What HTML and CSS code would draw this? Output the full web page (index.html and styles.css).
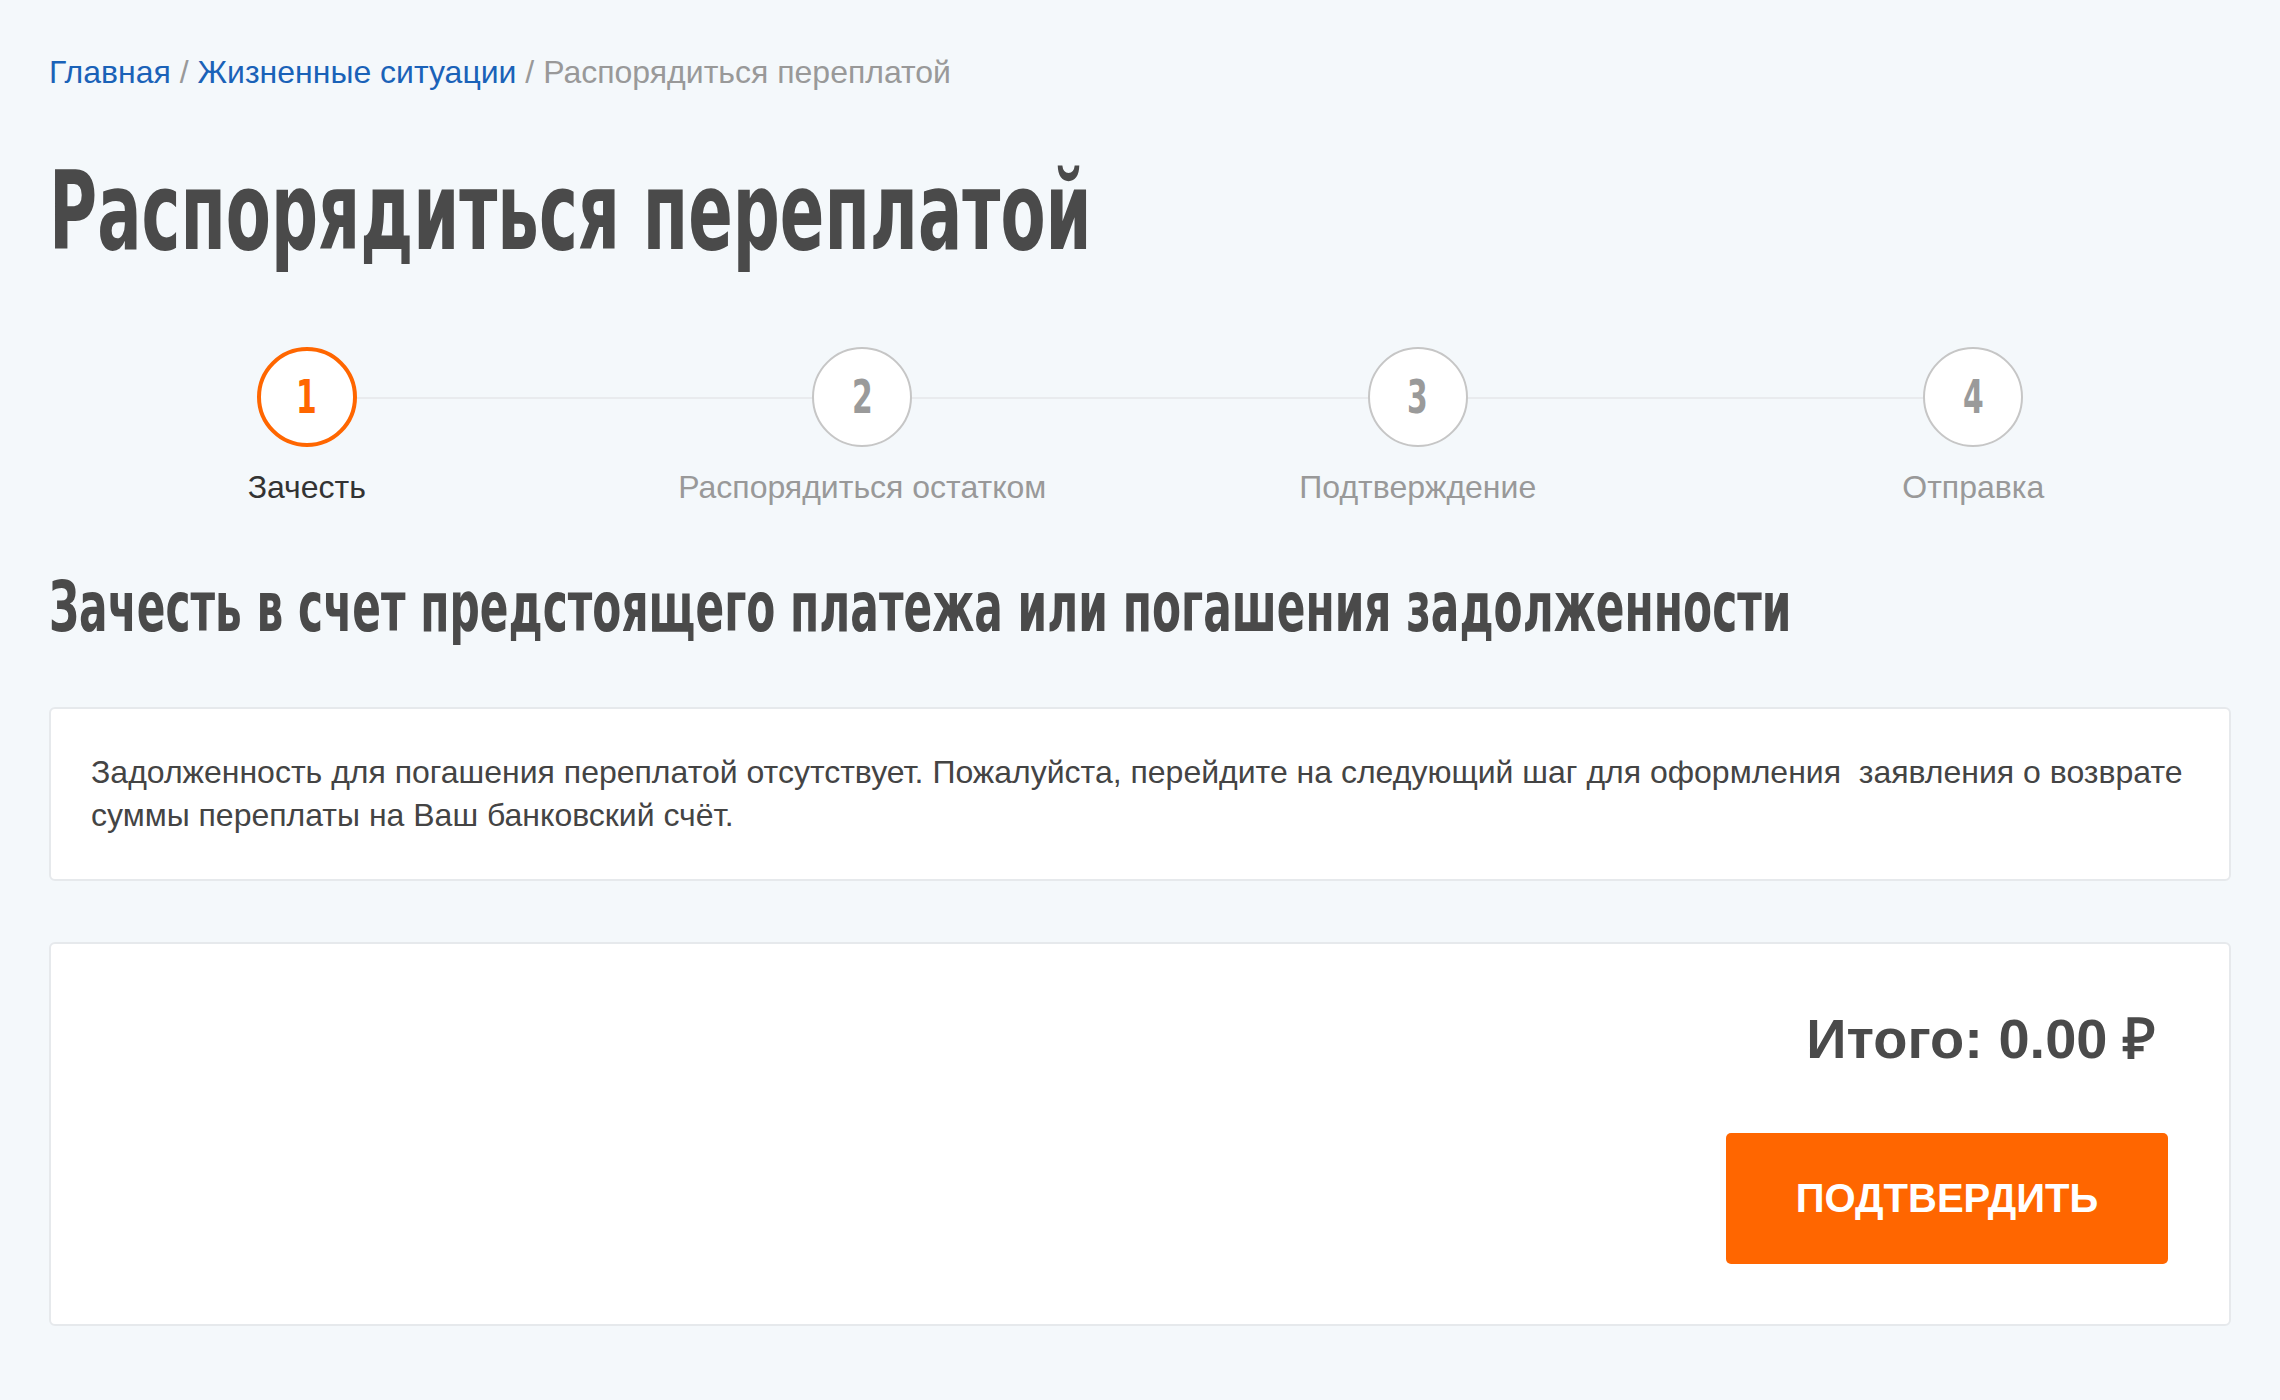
FILE: index.html
```html
<!DOCTYPE html>
<html lang="ru">
<head>
<meta charset="utf-8">
<title>Распорядиться переплатой</title>
<link rel="stylesheet" href="styles.css">
</head>
<body>
<div class="page">
  <nav class="crumbs">
    <a href="#">Главная</a> <span class="sep">/</span> <a href="#">Жизненные ситуации</a> <span class="sep">/</span> <span class="current">Распорядиться переплатой</span>
  </nav>
  <h1 class="title">Распорядиться переплатой</h1>
  <ol class="steps">
    <li class="step is-active"><span class="step-num"><span class="step-digit">1</span></span><span class="step-label">Зачесть</span></li>
    <li class="step"><span class="step-num"><span class="step-digit">2</span></span><span class="step-label">Распорядиться остатком</span></li>
    <li class="step"><span class="step-num"><span class="step-digit">3</span></span><span class="step-label">Подтверждение</span></li>
    <li class="step"><span class="step-num"><span class="step-digit">4</span></span><span class="step-label">Отправка</span></li>
  </ol>
  <h2 class="section-title">Зачесть в счет предстоящего платежа или погашения задолженности</h2>
  <div class="card info">
    Задолженность для погашения переплатой отсутствует. Пожалуйста, перейдите на следующий шаг для оформления&nbsp; заявления о возврате<br>суммы переплаты на Ваш банковский счёт.
  </div>
  <div class="card total">
    <div class="total-sum">Итого: 0.00 ₽</div>
    <button class="btn" type="button">ПОДТВЕРДИТЬ</button>
  </div>
</div>
</body>
</html>
```
FILE: styles.css
```css
body {
  margin: 0;
  background: #f4f8fb;
  font-family: "Liberation Sans", Arial, sans-serif;
  color: #444;
}

.page {
  padding: 50px 49px 75px;
}

.crumbs {
  font-size: 32px;
  line-height: 45px;
  color: #999;
}

.crumbs a {
  color: #1a62b8;
  text-decoration: none;
}

.title,
.section-title,
.step-num {
  font-family: "DejaVu Sans Condensed", "Liberation Sans Narrow", "Roboto Condensed", sans-serif;
  font-weight: 700;
}

.title {
  margin: 57px 0 0;
  font-size: 109px;
  line-height: 120px;
  color: #4a4a4a;
  white-space: nowrap;
  transform: scaleX(0.67);
  transform-origin: 0 0;
}

.steps {
  list-style: none;
  margin: 75px -20px 0;
  padding: 0;
  display: grid;
  grid-template-columns: repeat(4, 1fr);
  position: relative;
}

.steps::before {
  content: "";
  position: absolute;
  left: 12.5%;
  right: 12.5%;
  top: 50px;
  height: 2px;
  background: #e9ebee;
}

.step {
  display: flex;
  flex-direction: column;
  align-items: center;
  position: relative;
}

.step-num {
  width: 100px;
  height: 100px;
  box-sizing: border-box;
  border: 2px solid #c6c6c6;
  border-radius: 50%;
  background: #fff;
  display: flex;
  align-items: center;
  justify-content: center;
  font-size: 46px;
  color: #9a9a9a;
}

.step-digit {
  display: inline-block;
  transform: scaleX(0.72);
}

.is-active .step-num {
  border: 4px solid #ff6600;
  color: #ff6600;
}

.step-label {
  margin-top: 18px;
  font-size: 32px;
  line-height: 45px;
  color: #999;
}

.is-active .step-label {
  color: #333;
}

.section-title {
  margin: 59px 0 0;
  font-size: 69px;
  line-height: 76px;
  color: #4a4a4a;
  white-space: nowrap;
  transform: scaleX(0.682);
  transform-origin: 0 0;
}

.card {
  background: #fff;
  border: 2px solid #e6e9ec;
  border-radius: 6px;
}

.info {
  margin-top: 62px;
  padding: 42px 40px;
  font-size: 32px;
  line-height: 43px;
  color: #444;
}

.total {
  margin-top: 61px;
  padding: 61px 61px 60px;
  display: flex;
  flex-direction: column;
  align-items: flex-end;
}

.total-sum {
  font-size: 56px;
  line-height: 67px;
  font-weight: 700;
  color: #4a4a4a;
  margin-right: 12px;
}

.btn {
  margin-top: 61px;
  width: 442px;
  height: 131px;
  background: #ff6600;
  color: #fff;
  border: 0;
  border-radius: 5px;
  font-family: "Liberation Sans", Arial, sans-serif;
  font-size: 40px;
  font-weight: 700;
}
```
